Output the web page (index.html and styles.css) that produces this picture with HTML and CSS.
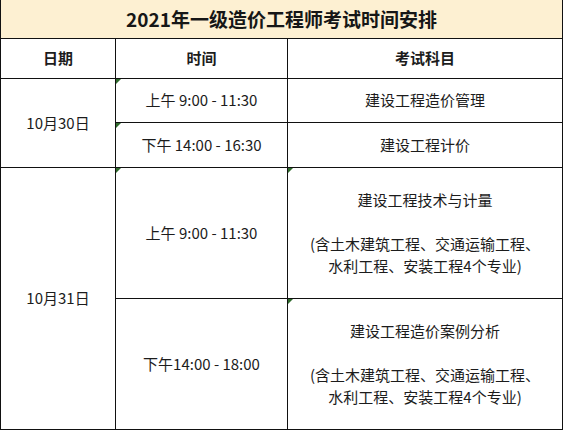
FILE: index.html
```html
<!DOCTYPE html>
<html lang="zh-CN">
<head>
<meta charset="utf-8">
<title>2021年一级造价工程师考试时间安排</title>
<link rel="stylesheet" href="styles.css">
</head>
<body>
<table class="schedule">
  <colgroup>
    <col class="c-date">
    <col class="c-time">
    <col class="c-subj">
  </colgroup>
  <tr class="r-title">
    <td colspan="3" class="title">2021年一级造价工程师考试时间安排</td>
  </tr>
  <tr class="r-head">
    <th>日期</th>
    <th>时间</th>
    <th>考试科目</th>
  </tr>
  <tr class="r-a">
    <td rowspan="2">10月30日</td>
    <td class="mark">上午 9:00 - 11:30</td>
    <td>建设工程造价管理</td>
  </tr>
  <tr class="r-b">
    <td class="mark">下午 14:00 - 16:30</td>
    <td>建设工程计价</td>
  </tr>
  <tr class="r-c">
    <td rowspan="2">10月31日</td>
    <td class="mark">上午 9:00 - 11:30</td>
    <td class="mark multi">建设工程技术与计量<br><br>(含土木建筑工程、交通运输工程、<br>水利工程、安装工程4个专业)</td>
  </tr>
  <tr class="r-d">
    <td>下午14:00 - 18:00</td>
    <td class="mark multi">建设工程造价案例分析<br><br>(含土木建筑工程、交通运输工程、<br>水利工程、安装工程4个专业)</td>
  </tr>
</table>
</body>
</html>
```

FILE: styles.css
```css
html, body {
  margin: 0;
  padding: 0;
  background: #ffffff;
}

body {
  font-family: "Noto Sans CJK SC", "Noto Sans", sans-serif;
  color: #1c1c1c;
}

.schedule {
  border-collapse: collapse;
  table-layout: fixed;
  width: 562px;
}

.c-date { width: 115px; }
.c-time { width: 172px; }
.c-subj { width: 275px; }

.schedule td,
.schedule th {
  border: 1px solid #111;
  text-align: center;
  vertical-align: middle;
  padding: 0;
  font-size: 15px;
  line-height: 22px;
  font-weight: normal;
  position: relative;
}

.schedule th {
  font-weight: bold;
}

.schedule .title {
  background: #fdf0d2;
  font-size: 19px;
  font-weight: bold;
  border-top: none;
  color: #161616;
}

.r-title { height: 38px; }
.r-head { height: 40px; }
.r-a { height: 44px; }
.r-b { height: 45px; }
.r-c { height: 131px; }
.r-d { height: 131px; }

.multi {
  line-height: 22.5px;
}

.mark::before {
  content: "";
  position: absolute;
  left: 0;
  top: 0;
  width: 0;
  height: 0;
  border-top: 5px solid #2f6a2c;
  border-right: 5px solid transparent;
}
```
